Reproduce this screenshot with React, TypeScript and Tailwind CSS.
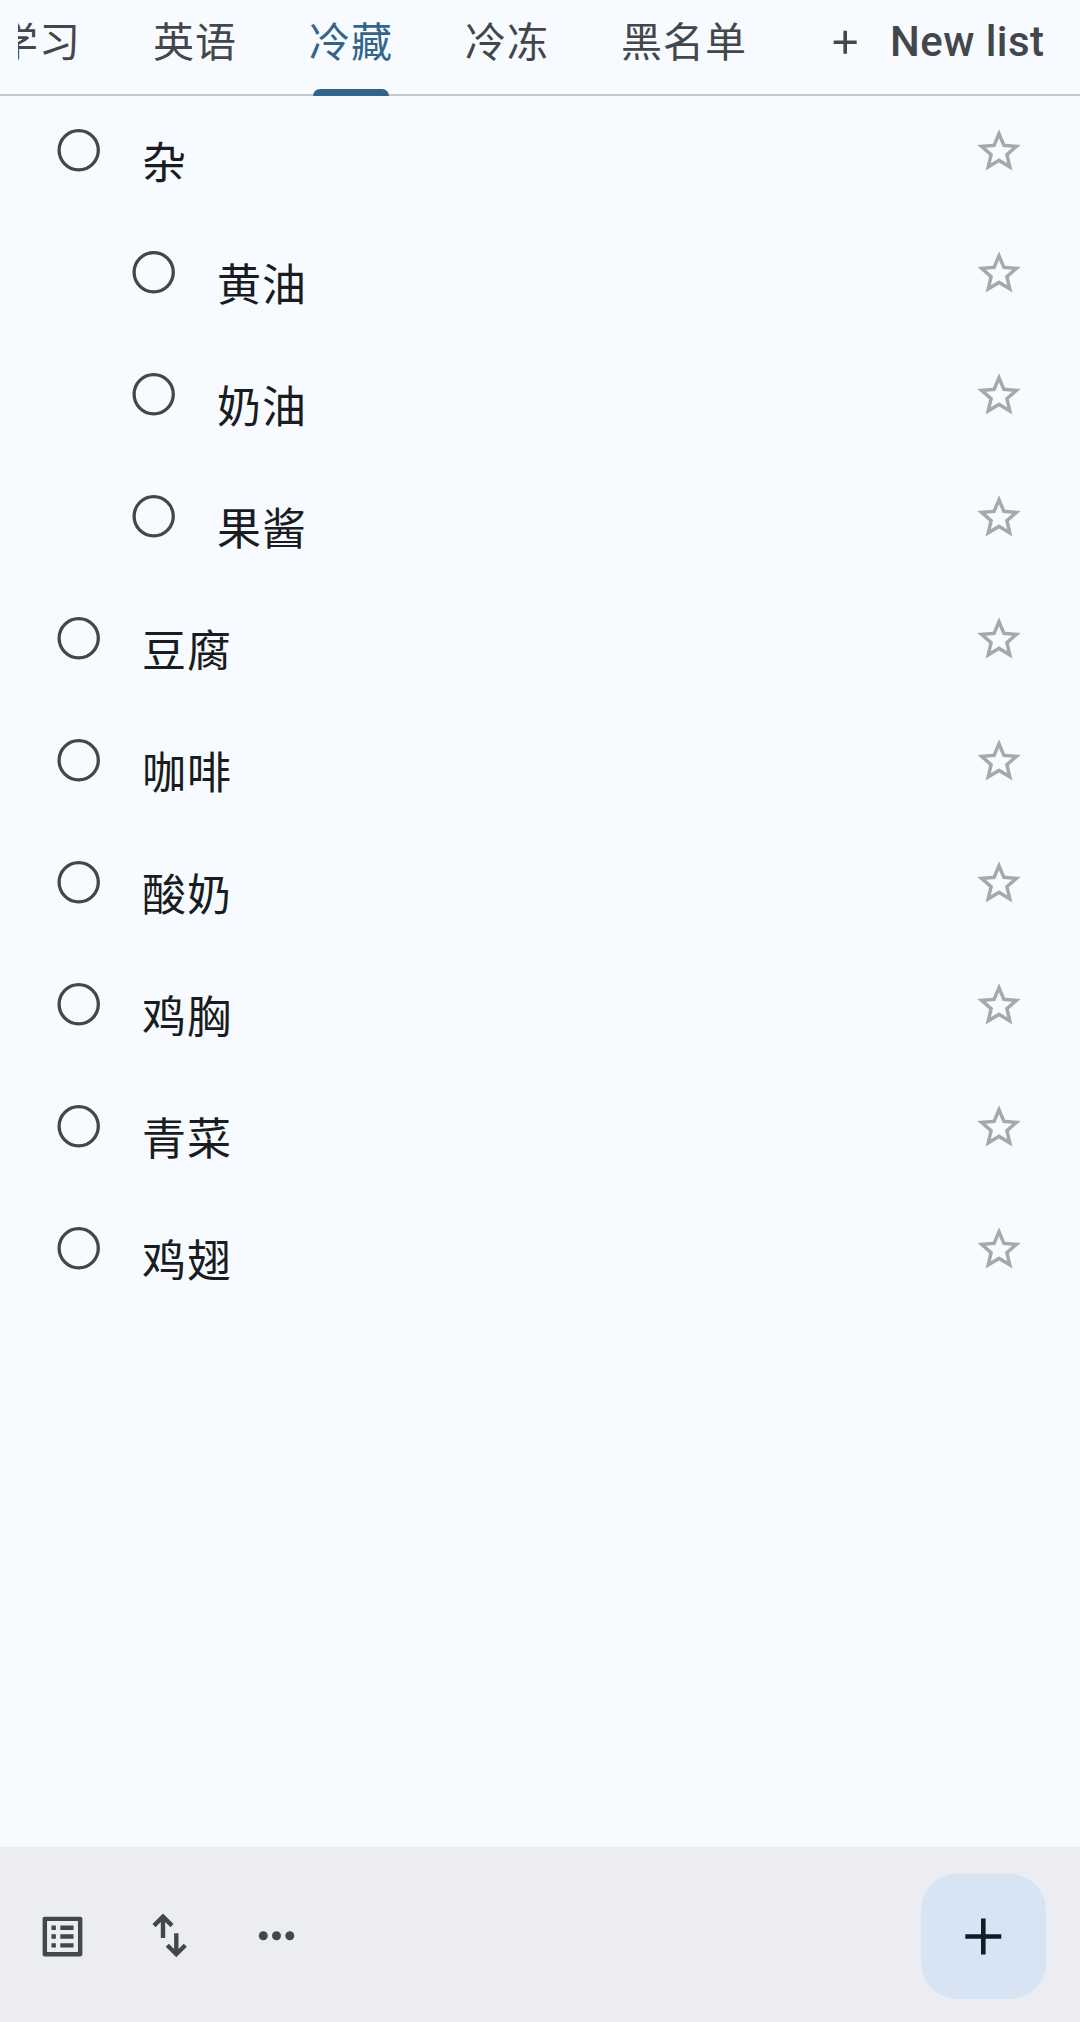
import { useState } from 'react'
import clsx from 'clsx'

const lists = ['学习', '英语', '冷藏', '冷冻', '黑名单']

const tasks = [
  { title: '杂', sub: false },
  { title: '黄油', sub: true },
  { title: '奶油', sub: true },
  { title: '果酱', sub: true },
  { title: '豆腐', sub: false },
  { title: '咖啡', sub: false },
  { title: '酸奶', sub: false },
  { title: '鸡胸', sub: false },
  { title: '青菜', sub: false },
  { title: '鸡翅', sub: false },
]

function StarIcon() {
  return (
    <svg viewBox="0 0 24 24" className="w-[52px] h-[52px]" fill="#a5a8ac">
      <path d="M22 9.24l-7.19-.62L12 2 9.19 8.63 2 9.24l5.46 4.73L5.82 21 12 17.27 18.18 21l-1.63-7.03L22 9.24zM12 15.4l-3.76 2.27 1-4.28-3.32-2.88 4.38-.38L12 6.1l1.71 4.04 4.38.38-3.32 2.88 1 4.28L12 15.4z" />
    </svg>
  )
}

function ListIcon() {
  return (
    <svg viewBox="0 0 24 24" className="w-[53px] h-[53px]" fill="#43474b">
      <path d="M19 5v14H5V5h14m1.1-2H3.9c-.5 0-.9.4-.9.9v16.2c0 .4.4.9.9.9h16.2c.4 0 .9-.5.9-.9V3.9c0-.5-.5-.9-.9-.9zM11 7h6v2h-6V7zm0 4h6v2h-6v-2zm0 4h6v2h-6zM7 7h2v2H7zm0 4h2v2H7zm0 4h2v2H7z" />
    </svg>
  )
}

function SortIcon() {
  return (
    <svg viewBox="0 0 53 53" className="w-[53px] h-[53px]" fill="none" stroke="#43474b" strokeWidth="4.4">
      <path d="M20 28V7M11 15.6l9-9 9 9" />
      <path d="M33.3 23.3v21M24.3 35.2l9 9 9-9" />
    </svg>
  )
}

function MoreIcon() {
  return (
    <svg viewBox="0 0 53 53" className="w-[53px] h-[53px]" fill="#43474b">
      <circle cx="13.3" cy="25.8" r="4.5" />
      <circle cx="26.5" cy="25.8" r="4.5" />
      <circle cx="39.8" cy="25.8" r="4.5" />
    </svg>
  )
}

export default function App() {
  const [active, setActive] = useState('冷藏')
  const [done, setDone] = useState<string[]>([])

  const toggle = (title: string) =>
    setDone((d) => (d.includes(title) ? d.filter((t) => t !== title) : [...d, title]))

  return (
    <div className="flex flex-col w-[1080px] h-[2022px] overflow-hidden bg-[#f7faff] font-['Roboto','Noto_Sans_CJK_SC',sans-serif]">
      <nav className="flex h-24 shrink-0 border-b-2 border-[#c4c7cc] pl-[18px]">
        <div className="flex h-24 overflow-hidden">
          {lists.map((name, i) => (
            <button
              key={name}
              onClick={() => setActive(name)}
              className={clsx(
                'flex flex-col items-center shrink-0 h-24 text-[41px] tracking-[1px] whitespace-nowrap',
                i === 0 ? '-ml-[21px] mr-[72px]' : 'mr-[72px]',
                active === name ? 'text-[#33658a]' : 'text-[#43474b]'
              )}
            >
              <span className="h-[89px] leading-[86px]">{name}</span>
              {active === name && <span className="w-[76px] h-[7px] rounded-t-[7px] bg-[#33658a]" />}
            </button>
          ))}
        </div>
        <button className="flex items-center h-[84px] ml-[14px] text-[#43474b]">
          <svg viewBox="0 0 24 24" className="w-6 h-6 mr-[33px]" stroke="currentColor" strokeWidth="3.6">
            <path d="M12.2 .8v23M.7 12.3h23" />
          </svg>
          <span className="text-[42px] leading-[84px] h-[84px] font-medium tracking-[.45px] whitespace-nowrap">New list</span>
        </button>
      </nav>

      <ul className="flex-1 pt-[29px]">
        {tasks.map((task) => (
          <li key={task.title} className={clsx('flex items-start h-[122px] pr-[55px]', task.sub ? 'pl-[132px]' : 'pl-[57px]')}>
            <button onClick={() => toggle(task.title)} className="pt-[4px]">
              <svg viewBox="0 0 44 44" className="w-11 h-11" fill={done.includes(task.title) ? '#43474b' : 'none'} stroke="#43474b" strokeWidth="3.3">
                <circle cx="21.7" cy="21.3" r="19.6" />
              </svg>
            </button>
            <span className="flex-1 ml-[41px] pt-[7px] text-[44px] leading-[64px] tracking-[1px] text-[#191c20]">{task.title}</span>
            <button>
              <StarIcon />
            </button>
          </li>
        ))}
      </ul>

      <footer className="flex items-center h-[175px] shrink-0 pl-9 pr-[34px] pt-[4px] bg-[#ebedf2]">
        <div className="flex flex-1 gap-[54px]">
          <button><ListIcon /></button>
          <button><SortIcon /></button>
          <button><MoreIcon /></button>
        </div>
        <button className="flex items-center justify-center w-[125px] h-[125px] rounded-[36px] bg-[#d7e4f3]">
          <svg viewBox="0 0 37 37" className="w-[37px] h-[37px]" stroke="#0f1d2a" strokeWidth="4.6">
            <path d="M18.3 .5v36M.3 18.5h36" />
          </svg>
        </button>
      </footer>
    </div>
  )
}
